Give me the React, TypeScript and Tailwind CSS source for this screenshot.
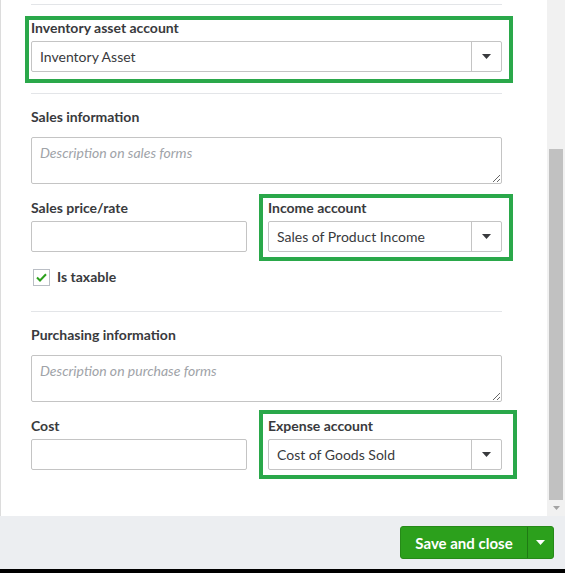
import React from 'react';

const font = { fontFamily: 'Lato, "Open Sans", Arial, sans-serif' };

const Caret: React.FC<{ color?: string }> = ({ color = '#393a3d' }) => (
  <svg width="9" height="5" viewBox="0 0 9 5">
    <path d="M0 0 L9 0 L4.5 5 Z" fill={color} />
  </svg>
);

const Label: React.FC<{ children: React.ReactNode }> = ({ children }) => (
  <div className="text-[14px] leading-[18px] font-bold text-[#393a3d]">{children}</div>
);

const SelectBox: React.FC<{ value: string }> = ({ value }) => (
  <div className="mt-[4px] flex h-[31px] w-full items-stretch rounded-[2px] border border-[#c4c4c4] bg-white">
    <div className="flex flex-1 items-center pl-[8px] text-[14px] text-[#393a3d]">{value}</div>
    <div className="flex w-[30px] items-center justify-center border-l border-[#c4c4c4]">
      <Caret />
    </div>
  </div>
);

const TextBox: React.FC = () => (
  <input className="mt-[4px] block h-[31px] w-full rounded-[2px] border border-[#c4c4c4] bg-white px-2 text-[14px] outline-none" />
);

const Area: React.FC<{ placeholder: string; className?: string }> = ({ placeholder, className = '' }) => (
  <textarea
    placeholder={placeholder}
    className={`block h-[47px] w-full rounded-[2px] border border-[#c4c4c4] bg-white px-[8px] pt-[6px] text-[14px] leading-[18px] italic outline-none placeholder:italic placeholder:text-[#a0a3a8] ${className}`}
    style={font}
  />
);

// green annotation frame drawn over a field
const Mark: React.FC<{ className: string }> = ({ className }) => (
  <div className={`pointer-events-none absolute border-[4px] border-[#2aa84a] ${className}`} />
);

const Divider: React.FC<{ className?: string }> = ({ className = '' }) => (
  <div className={`h-px bg-[#e3e5e8] ${className}`} />
);

export default function App() {
  return (
    <div className="flex h-[573px] w-[565px] flex-col overflow-hidden bg-[#eceef1]" style={font}>
      <div className="flex h-[516px]">
        <div className="flex-1 border-l border-[#dcdcdc] bg-white pl-[30px] pr-[45px]">
          <Divider className="mt-[4px]" />

          <div className="relative mt-[14px]">
            <Mark className="-top-[3px] -bottom-[11px] -left-[6px] -right-[11px]" />
            <Label>Inventory asset account</Label>
            <SelectBox value="Inventory Asset" />
          </div>

          <Divider className="mt-[21px]" />

          <div className="mt-[14px]">
            <Label>Sales information</Label>
          </div>
          <Area placeholder="Description on sales forms" className="mt-[11px]" />

          <div className="mt-[15px] flex gap-[21px]">
            <div className="w-[216px]">
              <Label>Sales price/rate</Label>
              <TextBox />
            </div>
            <div className="relative flex-1">
              <Mark className="-top-[5px] -bottom-[9px] -left-[9px] -right-[11px]" />
              <Label>Income account</Label>
              <SelectBox value="Sales of Product Income" />
            </div>
          </div>

          <div className="mt-[16px] flex items-center gap-[7px] pl-[2px]">
            <div className="flex h-[17px] w-[17px] items-center justify-center border border-[#babec5] bg-white">
              <svg width="11" height="9" viewBox="0 0 11 9">
                <path d="M1 4.5 L4 7.5 L10 1.2" fill="none" stroke="#2ca01c" strokeWidth="2" />
              </svg>
            </div>
            <Label>Is taxable</Label>
          </div>

          <Divider className="mt-[25px]" />

          <div className="mt-[14px]">
            <Label>Purchasing information</Label>
          </div>
          <Area placeholder="Description on purchase forms" className="mt-[11px]" />

          <div className="mt-[15px] flex gap-[21px]">
            <div className="w-[216px]">
              <Label>Cost</Label>
              <TextBox />
            </div>
            <div className="relative flex-1">
              <Mark className="-top-[7px] -bottom-[9px] -left-[9px] -right-[15px]" />
              <Label>Expense account</Label>
              <SelectBox value="Cost of Goods Sold" />
            </div>
          </div>
        </div>

        <div className="flex w-[18px] flex-col bg-[#f1f1f1]">
          <div className="h-[149px]" />
          <div className="mx-[2px] flex-1 bg-[#c1c1c1]" />
          <div className="flex h-[16px] items-center justify-center">
            <svg width="7" height="4" viewBox="0 0 7 4">
              <path d="M0 0 L7 0 L3.5 4 Z" fill="#a3a3a3" />
            </svg>
          </div>
        </div>
      </div>

      <div className="flex flex-1 items-center justify-end pr-[11px]">
        <div className="flex h-[33px] overflow-hidden rounded-[3px] border border-[#268a18] bg-[#2ca01c] text-white">
          <button className="w-[126px] pt-px text-[15px] font-bold">Save and close</button>
          <div className="flex w-[26px] items-center justify-center border-l border-[#1f7a14]">
            <Caret color="#ffffff" />
          </div>
        </div>
      </div>

      <div className="h-[4px] bg-black" />
    </div>
  );
}
